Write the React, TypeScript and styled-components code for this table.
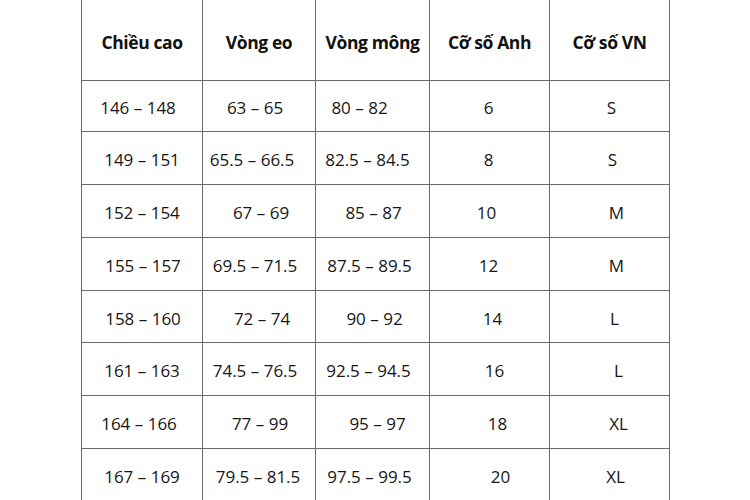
import styled, { createGlobalStyle } from "styled-components";

const GlobalStyle = createGlobalStyle`
  html, body {
    margin: 0;
    padding: 0;
    background: #ffffff;
  }
  body {
    width: 750px;
    height: 500px;
    overflow: hidden;
    font-family: "Open Sans", "Noto Sans", "Liberation Sans", sans-serif;
    color: #161616;
  }
`;

const Page = styled.div`
  width: 750px;
  height: 500px;
  overflow: hidden;
  padding-left: 81px;
  box-sizing: border-box;
`;

const Table = styled.table`
  border-collapse: collapse;
  table-layout: fixed;
  width: 588px;
  margin-top: -2px;
`;

const HeadCell = styled.th`
  height: 77px;
  border: 1.5px solid #6b6b6b;
  font-weight: 700;
  font-size: 17.5px;
  letter-spacing: -0.4px;
  text-align: center;
  padding: 4px 0 0;
  color: #111;
`;

const Row = styled.tr<{ $h: number }>`
  height: ${({ $h }) => $h}px;
`;

const Cell = styled.td`
  border: 1.5px solid #6b6b6b;
  font-size: 17px;
  font-weight: 400;
  text-align: center;
  padding: 3px 0 0;
  white-space: nowrap;
`;

const Value = styled.span<{ $dx: number }>`
  display: inline-block;
  transform: translateX(${({ $dx }) => $dx}px);
`;

const columns = [
  { title: "Chiều cao", width: 121 },
  { title: "Vòng eo", width: 113 },
  { title: "Vòng mông", width: 114 },
  { title: "Cỡ số Anh", width: 120 },
  { title: "Cỡ số VN", width: 120 },
];

const rows: { h: number; cells: [string, number][] }[] = [
  { h: 51, cells: [["146 – 148", -4], ["63 – 65", -4], ["80 – 82", -13], ["6", -1], ["S", 2]] },
  { h: 53, cells: [["149 – 151", 0], ["65.5 – 66.5", -7], ["82.5 – 84.5", -5], ["8", -1], ["S", 3]] },
  { h: 53, cells: [["152 – 154", 0], ["67 – 69", 2], ["85 – 87", 1], ["10", -3], ["M", 7]] },
  { h: 53, cells: [["155 – 157", 1], ["69.5 – 71.5", -4], ["87.5 – 89.5", -3], ["12", -1], ["M", 7]] },
  { h: 52, cells: [["158 – 160", 1], ["72 – 74", 3], ["90 – 92", 2], ["14", 3], ["L", 5]] },
  { h: 53, cells: [["161 – 163", 0], ["74.5 – 76.5", -4], ["92.5 – 94.5", -4], ["16", 5], ["L", 9]] },
  { h: 53, cells: [["164 – 166", -3], ["77 – 99", 1], ["95 – 97", 5], ["18", 8], ["XL", 9]] },
  { h: 53, cells: [["167 – 169", 0], ["79.5 – 81.5", -1], ["97.5 – 99.5", -3], ["20", 11], ["XL", 6]] },
];

export default function App() {
  return (
    <>
      <GlobalStyle />
      <Page>
        <Table>
          <colgroup>
            {columns.map((c) => (
              <col key={c.title} style={{ width: c.width }} />
            ))}
          </colgroup>
          <thead>
            <tr>
              {columns.map((c) => (
                <HeadCell key={c.title}>{c.title}</HeadCell>
              ))}
            </tr>
          </thead>
          <tbody>
            {rows.map((r, i) => (
              <Row key={i} $h={r.h}>
                {r.cells.map(([text, dx], j) => (
                  <Cell key={j}>
                    <Value $dx={dx}>{text}</Value>
                  </Cell>
                ))}
              </Row>
            ))}
          </tbody>
        </Table>
      </Page>
    </>
  );
}
